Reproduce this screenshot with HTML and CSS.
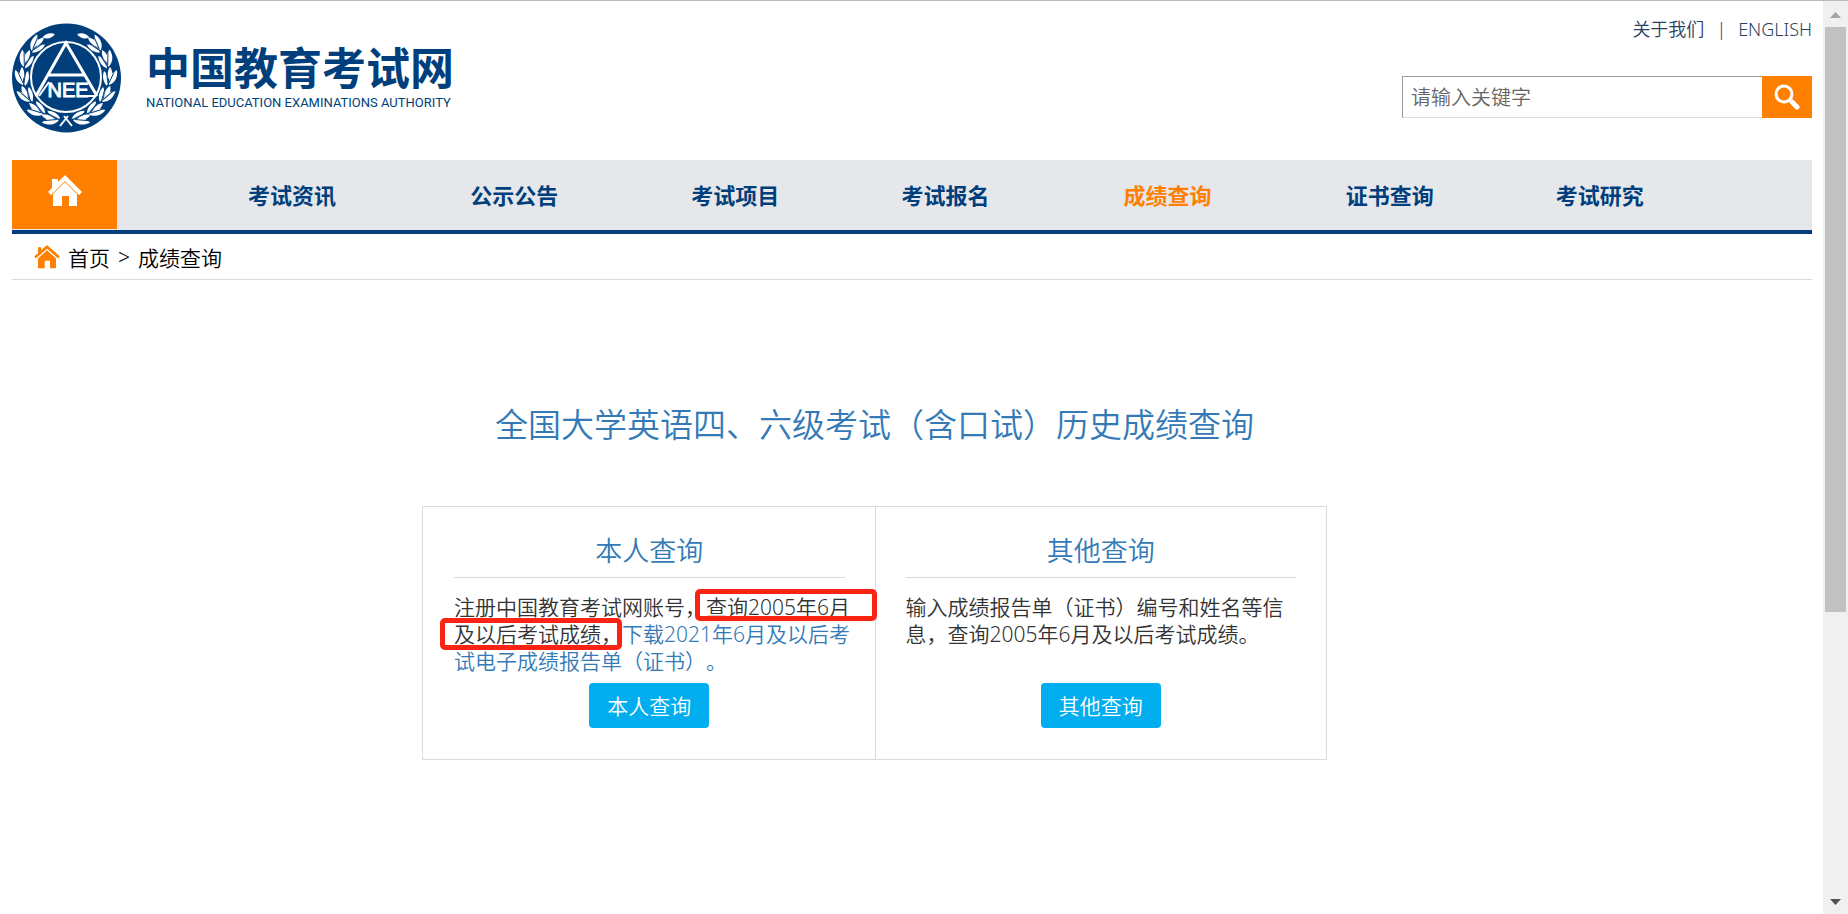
FILE: index.html
```html
<!DOCTYPE html>
<html lang="zh-CN">
<head>
    <meta charset="UTF-8">
    <meta name="viewport" content="width=device-width, initial-scale=1.0">
    <title>成绩查询 - 中国教育考试网</title>
    <link rel="stylesheet" href="styles.css">
</head>
<body>
    <div class="page">
        <header class="header">
            <a class="logo" href="#">
                <svg class="logo-mark" viewBox="0 0 110 110" aria-hidden="true">
                    <defs>
                        <g id="leaf" fill="#fff">
                            <path d="M8 1C6-5 0-8-7-7C-5-2 0 2 8 1Z"/>
                            <path d="M9 3C3 1-3 2-6 6C-1 8 5 7 9 3Z"/>
                            <path d="M4 0C0-3-6-3-10 0C-6 3 0 3 4 0Z"/>
                            <path d="M-7-5L6 1M-8 4L6 2" stroke="#003f7c" stroke-width="1"/>
                        </g>
                        <g id="branch">
                            <path d="M0-6C-5-5-8-2-9 3C-4 3 0-1 0-6Z" fill="#fff" transform="rotate(25) translate(1 -41) rotate(35)"/>
                            <use href="#leaf" transform="rotate(42) translate(0 -44)"/>
                            <use href="#leaf" transform="rotate(66) translate(0 -44)"/>
                            <use href="#leaf" transform="rotate(90) translate(0 -44)"/>
                            <use href="#leaf" transform="rotate(114) translate(0 -44)"/>
                            <use href="#leaf" transform="rotate(138) translate(0 -44)"/>
                            <use href="#leaf" transform="rotate(160) translate(0 -44)"/>
                            <path d="M-6 49L2 39" fill="none" stroke="#fff" stroke-width="2"/>
                        </g>
                    </defs>
                    <circle cx="54.5" cy="55" r="54.5" fill="#003f7c"/>
                    <g transform="translate(54 54)">
                        <use href="#branch"/>
                        <use href="#branch" transform="scale(-1 1)"/>
                    </g>
                    <circle cx="54" cy="54" r="35" fill="#003f7c" stroke="#fff" stroke-width="2"/>
                    <path d="M24 73L54 20L85 73M36 52H72" fill="none" stroke="#fff" stroke-width="3"/>
                    <path d="M27 73L37 59M68 73H84" fill="none" stroke="#fff" stroke-width="2"/>
                    <text class="logo-letters" x="56" y="74" text-anchor="middle">NEE</text>
                </svg>
                <span class="logo-text">
                    <span class="logo-cn">中国教育考试网</span>
                    <span class="logo-en">NATIONAL EDUCATION EXAMINATIONS AUTHORITY</span>
                </span>
            </a>
            <div class="header-right">
                <div class="top-links">
                    <a href="#">关于我们</a>
                    <span>|</span>
                    <a href="#">ENGLISH</a>
                </div>
                <form class="search">
                    <input type="text" name="keyword" placeholder="请输入关键字" aria-label="请输入关键字">
                    <button type="submit" aria-label="搜索">
                        <svg viewBox="0 0 26 26" fill="none" stroke="#fff" aria-hidden="true">
                            <circle cx="10" cy="10" r="8" stroke-width="3"/>
                            <path d="M15 15L18 18" stroke-width="3"/>
                            <path d="M18 18L23 23" stroke-width="5" stroke-linecap="round"/>
                        </svg>
                    </button>
                </form>
            </div>
        </header>

        <nav class="nav">
            <a class="nav-home" href="#" aria-label="首页">
                <svg viewBox="0 0 34 32" fill="#fff" aria-hidden="true">
                    <path d="M17 0L34 17L31 20L17 6L3 20L0 17L4 13V4H10V7Z"/>
                    <path d="M17 7L29 19V31H21V21H14V31H5V19Z"/>
                </svg>
            </a>
            <ul class="nav-list">
                <li><a href="#">考试资讯</a></li>
                <li><a href="#">公示公告</a></li>
                <li><a href="#">考试项目</a></li>
                <li><a href="#">考试报名</a></li>
                <li><a class="active" href="#">成绩查询</a></li>
                <li><a href="#">证书查询</a></li>
                <li><a href="#">考试研究</a></li>
            </ul>
        </nav>

        <div class="breadcrumb">
            <svg viewBox="0 0 34 32" fill="#ff8000" aria-hidden="true">
                <path d="M17 0L34 15L32 18L17 5L2 18L0 15L5 11V3H9V7Z"/>
                <path d="M17 7L29 18V31H21V21H14V31H5V18Z"/>
            </svg>
            <a href="#">首页</a>
            <span>&gt;</span>
            <a href="#">成绩查询</a>
        </div>

        <main class="main">
            <h1>全国大学英语四、六级考试（含口试）历史成绩查询</h1>
            <div class="panel">
                <section class="card">
                    <h2>本人查询</h2>
                    <p>注册中国教育考试网账号，查询2005年6月及以后考试成绩，<a href="#">下载2021年6月及以后考试电子成绩报告单（证书）。</a></p>
                    <button type="button">本人查询</button>
                </section>
                <section class="card">
                    <h2>其他查询</h2>
                    <p>输入成绩报告单（证书）编号和姓名等信息，查询2005年6月及以后考试成绩。</p>
                    <button type="button">其他查询</button>
                </section>
                <span class="mark mark-first"></span>
                <span class="mark mark-second"></span>
            </div>
        </main>
    </div>

    <div class="scrollbar" aria-hidden="true">
        <svg viewBox="0 0 25 26"><path d="M7 17L12.5 11L18 17Z" fill="#a3a3a3"/></svg>
        <div class="scroll-track"><div class="scroll-thumb"></div></div>
        <svg viewBox="0 0 25 26"><path d="M7 11L12.5 17L18 11Z" fill="#505050"/></svg>
    </div>
</body>
</html>
```

FILE: styles.css
```css
/* General Styles */
* {
    box-sizing: border-box;
}

body {
    margin: 0;
    min-height: 100vh;
    display: flex;
    border-top: 1px solid #bbb;
    background: #fff;
    color: #333;
    font-family: "Noto Sans", "Noto Sans CJK SC", sans-serif;
    font-weight: 350;
    text-spacing-trim: space-all;
}

a {
    color: inherit;
    text-decoration: none;
}

button, input {
    font: inherit;
}

.page {
    flex: 1;
    padding: 0 11px 0 12px;
}

/* Header */
.header {
    display: flex;
    justify-content: space-between;
    height: 159px;
}

.logo {
    display: flex;
    align-items: flex-start;
    gap: 24px;
    padding-top: 22px;
    color: #003f7c;
}

.logo-mark {
    width: 110px;
    height: 110px;
}

.logo-letters {
    font: 20px "Liberation Sans", sans-serif;
    fill: #fff;
    stroke: #fff;
}

.logo-text {
    display: flex;
    flex-direction: column;
    gap: 2px;
    padding-top: 16px;
}

.logo-cn {
    font-family: "Noto Sans CJK SC", sans-serif;
    font-size: 44px;
    font-weight: 700;
    line-height: 54px;
}

.logo-en {
    font-family: Roboto, "Liberation Sans", sans-serif;
    font-size: 13px;
    font-weight: 400;
    line-height: 16px;
}

.header-right {
    display: flex;
    flex-direction: column;
    align-items: flex-end;
    gap: 33px;
    padding-top: 14px;
}

.top-links {
    display: flex;
    gap: 12px;
    font-size: 18px;
    line-height: 28px;
    color: #2b3f63;
}

.search {
    display: flex;
    height: 42px;
}

.search input {
    width: 360px;
    padding: 0 8px;
    border: 1px solid #999;
    border-right: 0;
    border-bottom-color: #ddd;
    font-size: 20px;
}

.search input::placeholder {
    color: #666;
}

.search button {
    width: 50px;
    padding: 0;
    border: 0;
    background: #ff8000;
}

.search svg {
    width: 26px;
    height: 26px;
    vertical-align: middle;
}

/* Navigation */
.nav {
    display: flex;
    height: 74px;
    border-bottom: 4px solid #003f7c;
    background: #e6e7eb;
}

.nav-home {
    display: flex;
    justify-content: center;
    width: 105px;
    margin-bottom: 1px;
    padding-top: 15px;
    background: #ff8000;
}

.nav-home svg {
    width: 34px;
    height: 32px;
}

.nav-list {
    flex: 1;
    display: grid;
    grid-template-columns: 222fr 221fr 210fr 222fr 222fr 210fr 256fr;
    margin: 0;
    padding: 0 0 0 131px;
    list-style: none;
    color: #003f7c;
    font-size: 22px;
    font-weight: 700;
    line-height: 70px;
}

.nav-list .active {
    color: #ff8000;
}

.breadcrumb {
    display: flex;
    align-items: center;
    gap: 8px;
    height: 46px;
    padding-left: 22px;
    border-bottom: 1px solid #d9d9d9;
    color: #000;
    font-size: 21px;
}

.breadcrumb svg {
    width: 26px;
    height: 24px;
}

/* Score query */
.main {
    display: flex;
    flex-direction: column;
    align-items: center;
    padding: 121px 75px 0 0;
}

h1, h2 {
    margin: 0;
    color: #337ab7;
    font-weight: 350;
}

h1 {
    font-size: 33px;
    line-height: 48px;
}

.panel {
    position: relative;
    display: flex;
    width: 905px;
    margin-top: 57px;
    border: 1px solid #d9dcdc;
}

.card {
    flex: 1;
    display: flex;
    flex-direction: column;
    align-items: center;
    padding: 24px 30px 31px 31px;
}

.card + .card {
    border-left: 1px solid #d9dcdc;
    padding-left: 30px;
}

h2 {
    align-self: stretch;
    padding-bottom: 6px;
    border-bottom: 1px solid #d9dcdc;
    font-size: 27px;
    line-height: 40px;
    text-align: center;
}

.card p {
    align-self: stretch;
    min-height: 81px;
    margin: 16px -10px 8px 0;
    font-size: 21px;
    line-height: 27px;
}

.card p a {
    color: #337ab7;
}

.card button {
    width: 120px;
    height: 45px;
    padding: 0 0 2px;
    border: 0;
    border-radius: 4px;
    background: #00aeef;
    color: #fff;
    font-size: 21px;
}

/* Red frames laid over the highlighted words */
.mark {
    position: absolute;
    width: 182px;
    height: 32px;
    border: 5px solid #fb2314;
    border-radius: 5px;
}

.mark-first {
    top: 82px;
    left: 272px;
}

.mark-second {
    top: 111px;
    left: 17px;
}

/* Scrollbar */
.scrollbar {
    display: flex;
    flex-direction: column;
    width: 25px;
    background: #f0f0f0;
}

.scrollbar svg {
    width: 25px;
    height: 26px;
}

.scroll-track {
    flex: 1;
    padding: 0 2px;
}

.scroll-thumb {
    height: 68%;
    background: #c1c1c1;
}
```
